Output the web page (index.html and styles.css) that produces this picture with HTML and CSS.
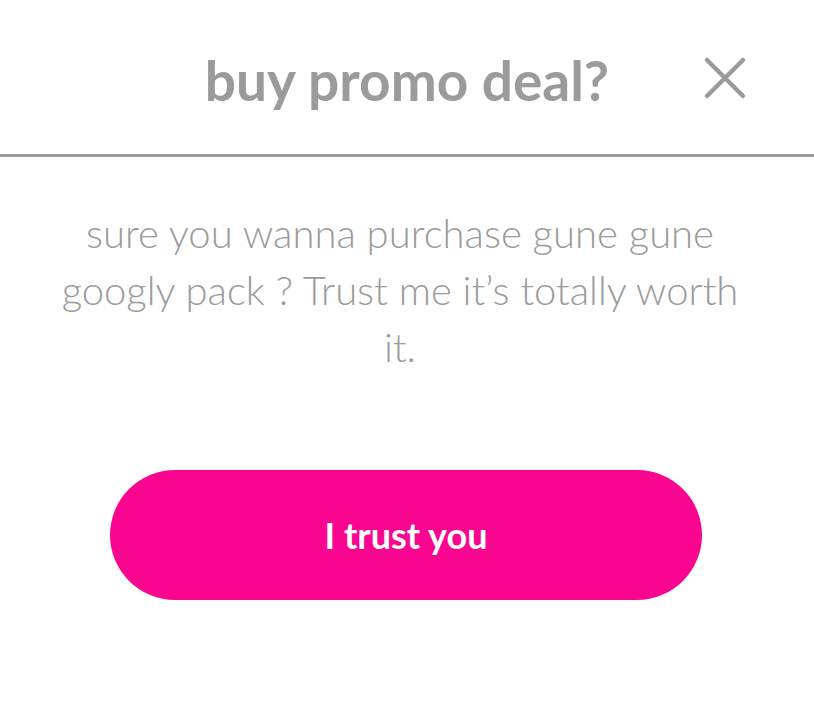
FILE: index.html
```html
<!DOCTYPE html>
<html>
<head>
<meta charset="utf-8">
<link rel="stylesheet" href="styles.css">
</head>
<body>
<div class="dialog">
  <header class="header">
    <h1 class="title">buy promo deal?</h1>
    <button class="close" aria-label="close">
      <svg width="44" height="44" viewBox="0 0 44 44"><path d="M4 4 L40 40 M40 4 L4 40" stroke="#9b9b9b" stroke-width="4.5" stroke-linecap="round"/></svg>
    </button>
  </header>
  <div class="body">
    <p class="message">sure you wanna purchase gune gune googly pack ? Trust me it’s totally worth it.</p>
    <button class="cta">I trust you</button>
  </div>
</div>
</body>
</html>
```
FILE: styles.css
```css
html, body { margin: 0; padding: 0; background: #fff; }
.dialog { width: 814px; height: 716px; font-family: Lato, "Open Sans", sans-serif; color: #9b9b9b; }
.header {
  position: relative;
  height: 154px;
  border-bottom: 3px solid #9b9b9b;
  display: flex; justify-content: center; align-items: flex-start;
}
.title { margin: 45px 0 0; font-size: 55px; font-weight: 700; line-height: 70px; color: #9b9b9b; }
.close {
  position: absolute; right: 67px; top: 56px;
  width: 44px; height: 44px; padding: 0; border: 0; background: none;
}
.close svg { display: block; }
.body { display: flex; flex-direction: column; align-items: center; }
.message {
  align-self: stretch;
  margin: 48px 0 0; padding: 0 57px 0 43px;
  font-size: 40px; font-weight: 300; line-height: 57px; text-align: center;
}
.cta {
  margin: 94px 2px 0 0; width: 592px; height: 130px; border: 0; border-radius: 65px;
  background: #fa0590; color: #fff; font-family: Lato, sans-serif; font-size: 36px; font-weight: 700;
}
```
